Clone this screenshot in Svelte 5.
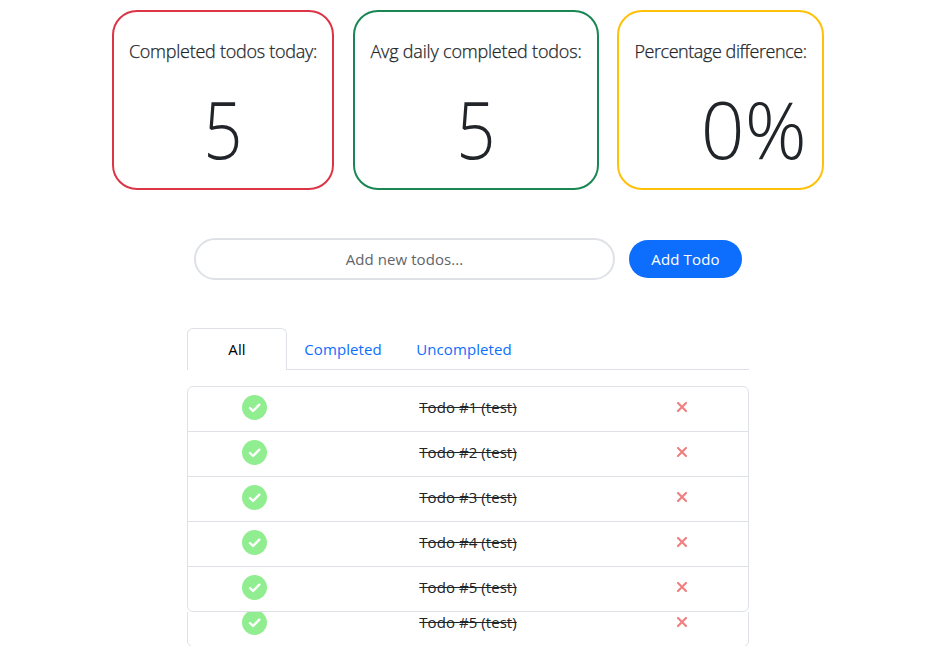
<script>
  const stats = [
    { label: 'Completed todos today:', value: '5', tone: 'danger' },
    { label: 'Avg daily completed todos:', value: '5', tone: 'success' },
    { label: 'Percentage difference:', value: '0%', tone: 'warning' }
  ];
  const tabs = ['All', 'Completed', 'Uncompleted'];
  const todos = [1, 2, 3, 4, 5].map((n) => `Todo #${n} (test)`);
  let active = $state('All');
</script>

{#snippet row(todo)}
  <li>
    <span class="cell done">
      <svg width="25" height="25" viewBox="0 0 25 25">
        <circle cx="12.5" cy="12.5" r="12.5" fill="#90ee90" />
        <path d="M8 13l3 3 6.3-6.3" fill="none" stroke="#fff" stroke-width="2.4" stroke-linecap="round" stroke-linejoin="round" />
      </svg>
    </span>
    <span class="cell name"><s>{todo}</s></span>
    <span class="cell remove">
      <svg width="12" height="12" viewBox="0 0 12 12">
        <path d="M2 2l8 8M10 2l-8 8" fill="none" stroke="#f08080" stroke-width="2.2" stroke-linecap="round" />
      </svg>
    </span>
  </li>
{/snippet}

<main>
  <section class="stats">
    {#each stats as stat}
      <article class={stat.tone}>
        <p>{stat.label}</p>
        <div class="value">{stat.value}</div>
      </article>
    {/each}
  </section>

  <form onsubmit={(e) => e.preventDefault()}>
    <input type="text" placeholder="Add new todos..." />
    <button type="submit">Add Todo</button>
  </form>

  <section class="list">
    <nav>
      {#each tabs as tab}
        <button class="tab {tab.toLowerCase()}" class:active={active === tab} onclick={() => (active = tab)}>{tab}</button>
      {/each}
    </nav>
    <ul>
      {#each todos as todo}
        {@render row(todo)}
      {/each}
    </ul>
    <div class="overflow">
      <ul>{@render row(todos[4])}</ul>
    </div>
  </section>
</main>

<style>
  :global(body) { margin: 0; background: #fff; overflow: hidden; }
  main, input, button { font-family: 'Open Sans', 'Noto Sans', sans-serif; font-size: 15px; }
  main { box-sizing: border-box; width: 936px; height: 646px; padding-top: 10px; overflow: hidden; color: #212529; }
  .stats { display: flex; margin-left: 112px; height: 180px; }
  article { box-sizing: border-box; flex: none; border: 2px solid; border-radius: 25px; padding: 25px 0 0; }
  .danger { width: 222px; border-color: #dc3545; margin-right: 19px; }
  .success { width: 246px; border-color: #198754; margin-right: 18px; }
  .warning { width: 207px; border-color: #ffc107; }
  p { margin: 0; font-size: 18px; font-weight: 300; line-height: 28px; text-align: center; white-space: nowrap; letter-spacing: -0.26px; -webkit-text-stroke: 0.25px #212529; }
  .success p { letter-spacing: -0.19px; }
  .warning p { letter-spacing: -0.43px; }
  .value { margin-top: 15px; font-size: 80px; font-weight: 300; line-height: 96px; text-align: center; transform: scaleX(.86); }
  .warning .value { text-align: right; transform: scaleX(.96); transform-origin: right; padding-right: 16px; }

  form { display: flex; align-items: center; margin: 48px 0 0 194px; height: 42px; }
  input { box-sizing: border-box; width: 421px; height: 42px; border: 2px solid #dee2e6; border-radius: 21px; padding: 0 16px; text-align: center; background: #fff; letter-spacing: 0.06px; }
  input::placeholder { color: #5f656b; opacity: 1; }
  form button { width: 113px; height: 38px; margin-left: 14px; border: 0; border-radius: 19px; padding: 0; background: #0d6efd; color: #fff; letter-spacing: 0.15px; }

  .list { width: 562px; margin: 48px 0 0 187px; }
  nav { box-sizing: border-box; display: flex; height: 42px; border-bottom: 1px solid #dee2e6; }
  .tab { box-sizing: border-box; height: 42px; padding: 0 0 2px; border: 1px solid transparent; border-bottom: 0; border-radius: 6px 6px 0 0; background: none; color: #0d6efd; text-align: center; letter-spacing: 0.08px; }
  .all { width: 100px; }
  .completed { width: 112px; }
  .uncompleted { width: 130px; }
  .tab.active { border-color: #dee2e6; background: #fff; color: #000; }
  ul { box-sizing: border-box; list-style: none; margin: 16px 0 0; padding: 0; border: 1px solid #dee2e6; border-radius: 6px; }
  li { box-sizing: border-box; display: flex; height: 45px; border-bottom: 1px solid #dee2e6; }
  li:last-child { height: 44px; border-bottom: 0; }
  .cell { display: flex; align-items: center; justify-content: center; height: 40px; }
  .done { width: 133px; }
  .name { width: 294px; letter-spacing: 0.06px; }
  .remove { width: 133px; }
  .done svg, .remove svg { display: block; }
  .overflow { height: 34px; overflow: hidden; }
  .overflow ul { margin-top: -11px; }
</style>
